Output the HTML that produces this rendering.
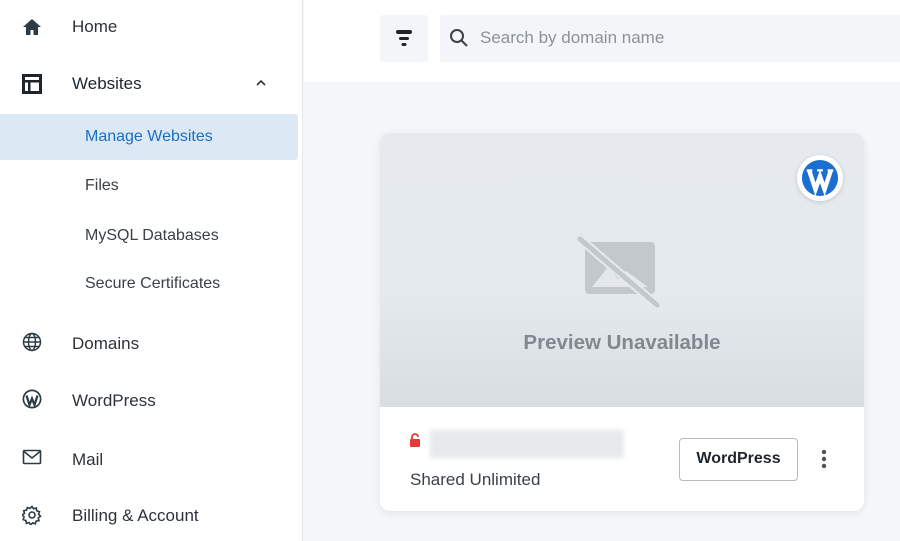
<!DOCTYPE html>
<html><head><meta charset="utf-8"><style>
*{margin:0;padding:0;box-sizing:border-box}
body{width:900px;height:541px;overflow:hidden;background:#f4f6f9;font-family:"Liberation Sans",Arial,sans-serif;position:relative;color:#2a2f33}
.side{position:absolute;left:0;top:0;width:303px;height:541px;background:#fff;border-right:1px solid #e6e9ed}
.item{position:absolute;left:72px;font-size:17px;color:#2d3338}
.sub{position:absolute;left:85px;font-size:16px;color:#3a4147}
.ic{position:absolute;left:22px;width:20px;height:20px}
.active{position:absolute;left:0;top:114px;width:298px;height:46px;background:#dce9f5;border-radius:0 3px 3px 0}
.top{position:absolute;left:304px;top:0;width:596px;height:82px;background:#fff}
.filter{position:absolute;left:380px;top:15px;width:48px;height:47px;background:#f3f5f8;border-radius:3px}
.search{position:absolute;left:440px;top:15px;width:470px;height:47px;background:#f3f5f8;border-radius:3px}
.card{position:absolute;left:380px;top:133px;width:484px;height:378px;background:#fff;border-radius:10px;box-shadow:0 2px 8px rgba(0,0,0,.08);overflow:hidden}
.prev{position:absolute;left:0;top:0;width:484px;height:274px;background:linear-gradient(#e6eaee 0%,#e4e9ed 60%,#d8dde1 100%)}
</style></head><body>
<div class="side">
<svg class="ic" style="top:17px" viewBox="0 0 20 20"><path d="M10 2 1 10h3v8h4.5v-5h3v5H16v-8h3z" fill="#2d3b45"/></svg>
<div class="item" style="top:17px">Home</div>
<svg class="ic" style="top:74px" viewBox="0 0 20 20"><rect x="1.5" y="1.5" width="17" height="17" fill="none" stroke="#1e262c" stroke-width="3"/><rect x="1.5" y="6" width="17" height="2.5" fill="#1e262c"/><rect x="6" y="6" width="2.5" height="12" fill="#1e262c"/></svg>
<div class="item" style="top:74px;color:#1e262c">Websites</div>
<svg style="position:absolute;left:255px;top:78px" width="12" height="10" viewBox="0 0 12 10"><path d="M2 7 6 3l4 4" fill="none" stroke="#2d3338" stroke-width="1.6"/></svg>
<div class="active"></div>
<div class="sub" style="top:128px;color:#1a6fbf">Manage Websites</div>
<div class="sub" style="top:177px">Files</div>
<div class="sub" style="top:227px">MySQL Databases</div>
<div class="sub" style="top:275px">Secure Certificates</div>
<svg class="ic" style="top:332px" viewBox="0 0 20 20" fill="none" stroke="#2d3b45" stroke-width="1.5"><circle cx="10" cy="10" r="8.5"/><ellipse cx="10" cy="10" rx="3.5" ry="8.5"/><path d="M1.5 10h17M3 5.5h14M3 14.5h14"/></svg>
<div class="item" style="top:334px">Domains</div>
<svg class="ic" style="top:389px" viewBox="0 0 20 20"><circle cx="10" cy="10" r="9.5" fill="#2d3b45"/><circle cx="10" cy="10" r="7.8" fill="#fff"/><path d="M4.5 6.5 7.5 16 10 9.5l2.5 6.5 3-9.5" stroke="#2d3b45" stroke-width="2.2" fill="none"/></svg>
<div class="item" style="top:391px">WordPress</div>
<svg class="ic" style="top:447px" viewBox="0 0 20 20" fill="none" stroke="#2d3b45" stroke-width="1.6"><rect x="1.5" y="3.5" width="17" height="13" rx="1"/><path d="M2 4.5l8 6.5 8-6.5"/></svg>
<div class="item" style="top:450px">Mail</div>
<svg class="ic" style="top:505px" viewBox="0 0 20 20" fill="none" stroke="#2d3b45" stroke-width="1.6"><circle cx="10" cy="10" r="3"/><path d="M10 1.5l1.6 2.3 2.7-.8.5 2.8 2.7.9-.9 2.6 1.9 2-2.3 1.6.8 2.7-2.8.5-.9 2.7-2.6-.9-2 1.9-1.6-2.3-2.7.8-.5-2.8-2.7-.9.9-2.6-1.9-2 2.3-1.6-.8-2.7 2.8-.5.9-2.7 2.6.9z"/></svg>
<div class="item" style="top:506px">Billing &amp; Account</div>
</div>
<div class="top"></div>
<div class="filter"><svg style="position:absolute;left:16px;top:15px" width="16" height="17" viewBox="0 0 16 17"><rect x="0" y="0" width="16" height="4" rx="2" fill="#1e262c"/><rect x="3" y="7" width="10" height="3" rx="1.5" fill="#1e262c"/><rect x="5.5" y="13" width="5" height="3" rx="1.5" fill="#1e262c"/></svg></div>
<div class="search"><svg style="position:absolute;left:9px;top:13px" width="20" height="20" viewBox="0 0 20 20" fill="none" stroke="#3a4147" stroke-width="2"><circle cx="8" cy="8" r="6"/><path d="M12.5 12.5 18 18"/></svg><div style="position:absolute;left:40px;top:13px;font-size:17px;color:#8a9299">Search by domain name</div></div>
<div class="card">
<div class="prev">
<div style="position:absolute;left:417px;top:22px;width:46px;height:46px;border-radius:50%;background:#fff;box-shadow:0 1px 4px rgba(0,0,0,.15)"><svg style="position:absolute;left:4px;top:4px" width="38" height="38" viewBox="0 0 20 20"><circle cx="10" cy="10" r="9.5" fill="#1a6fd0"/><path d="M4.3 6 7.6 16 10 9.2l2.4 6.8 3.3-10" stroke="#fff" stroke-width="2.3" fill="none"/><path d="M3 6h3M8.5 6h3M14 6h3" stroke="#fff" stroke-width="1.2"/></svg></div>
<svg style="position:absolute;left:195px;top:102px" width="90" height="75" viewBox="0 0 90 75"><rect x="10" y="7" width="70" height="52" rx="4" fill="#c3c8cc"/><path d="M17 52l16-20 10 12 8-8 22 16z" fill="#e4e8ec"/><path d="M5 4 82 70" stroke="#e6eaed" stroke-width="9"/><path d="M5 4 82 70" stroke="#c3c8cc" stroke-width="5" stroke-linecap="round"/></svg>
<div style="position:absolute;left:0;width:484px;top:198px;text-align:center;font-size:20.5px;font-weight:bold;color:#80898f">Preview Unavailable</div>
</div>
<svg style="position:absolute;left:29px;top:300px" width="12" height="14" viewBox="0 0 12 14"><path d="M3 6V4a3 3 0 0 1 6 0" fill="none" stroke="#e53935" stroke-width="1.8"/><rect x="1" y="6" width="10" height="8" rx="1" fill="#e53935"/></svg>
<div style="position:absolute;left:50px;top:297px;width:194px;height:28px;background:#e7e9eb;filter:blur(2px)"></div>
<div style="position:absolute;left:30px;top:337px;font-size:17px;color:#3a4147">Shared Unlimited</div>
<div style="position:absolute;left:299px;top:305px;width:119px;height:43px;border:1.5px solid #b5bbc0;border-radius:4px;font-size:16px;font-weight:bold;color:#1e262c;text-align:center;line-height:40px">WordPress</div>
<svg style="position:absolute;left:441px;top:316px" width="6" height="20" viewBox="0 0 6 20" fill="#4a5258"><circle cx="3" cy="3" r="2.2"/><circle cx="3" cy="10" r="2.2"/><circle cx="3" cy="17" r="2.2"/></svg>
</div>
</body></html>
